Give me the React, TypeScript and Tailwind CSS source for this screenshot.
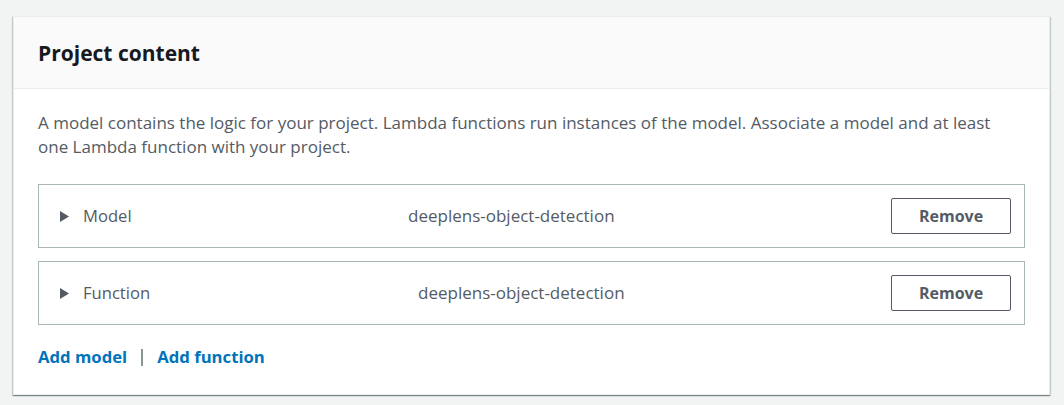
import React from "react";

function Row({ label, value, valueLeft }: { label: string; value: string; valueLeft: string }) {
  return (
    <div className="flex h-[64px] items-center border border-[#aab7b8] pl-[21px] pr-[13px]">
      <svg width="9" height="11" viewBox="0 0 9 11" className="shrink-0">
        <path d="M0 0 L9 5.5 L0 11 Z" fill="#545b64" />
      </svg>
      <span className="ml-[14px] text-[16.6px] text-[#545b64]">{label}</span>
      <span className={`absolute text-[17px] text-[#545b64] ${valueLeft}`}>{value}</span>
      <button className="ml-auto h-[36px] w-[120px] rounded-[2px] border border-[#545b64] bg-white text-[16px] font-bold text-[#545b64]">
        Remove
      </button>
    </div>
  );
}

export default function App() {
  return (
    <div
      className="min-h-[405px] w-[1064px] bg-[#f2f3f3] pl-[13px] pr-[14px] pt-[16px]"
      style={{ fontFamily: '"Open Sans", "Noto Sans", sans-serif' }}
    >
      <div className="relative border border-[#eaeded] bg-white shadow-[0_1px_1px_0_rgba(0,28,36,0.3),1px_1px_1px_0_rgba(0,28,36,0.15),-1px_1px_1px_0_rgba(0,28,36,0.15)]">
        <div className="flex h-[72px] items-center border-b border-[#eaeded] bg-[#fafafa] px-[24px]">
          <h2 className="text-[21px] font-bold leading-[26px] text-[#16191f]">Project content</h2>
        </div>
        <div className="px-[24px] pb-[25px] pt-[22px]">
          <p className="max-w-[975px] text-[17px] leading-[24px] text-[#545b64]">
            A model contains the logic for your project. Lambda functions run instances of the model. Associate a model and at least one Lambda function with your project.
          </p>
          <div className="mt-[25px] flex flex-col gap-[13px]">
            <div className="relative">
              <Row label="Model" value="deeplens-object-detection" valueLeft="left-[370px]" />
            </div>
            <div className="relative">
              <Row label="Function" value="deeplens-object-detection" valueLeft="left-[380px]" />
            </div>
          </div>
          <div className="mt-[20px] flex items-center text-[16.7px] font-bold leading-[24px]">
            <a className="text-[#0073bb]">Add model</a>
            <span className="mx-[14px] h-[17px] w-[2px] bg-[#879596]" />
            <a className="text-[#0073bb]">Add function</a>
          </div>
        </div>
      </div>
    </div>
  );
}
